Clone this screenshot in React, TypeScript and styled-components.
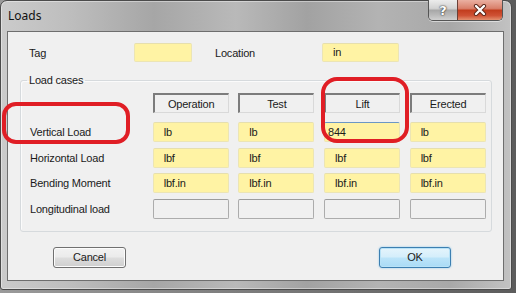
import React from "react";
import styled, { createGlobalStyle } from "styled-components";

const GlobalStyle = createGlobalStyle`
  * { box-sizing: border-box; }
  body {
    margin: 0;
    background: #7a7a7a;
    font-family: "Liberation Sans", Arial, sans-serif;
  }
`;

const Screen = styled.div`
  position: relative;
  width: 516px;
  height: 293px;
  overflow: hidden;
  background: linear-gradient(90deg, #9a9a9a, #5c5c5c);
`;

const Window = styled.div`
  width: 512px;
  height: 290px;
  border: 1px solid #4b4b4b;
  border-radius: 7px 7px 3px 3px;
  background: linear-gradient(
    90deg,
    #cbcbcb 0%,
    #bdbdbd 14%,
    #a6a6a6 30%,
    #b9b9b9 46%,
    #a2a2a2 60%,
    #b3b3b3 74%,
    #a8a8a8 88%,
    #c2c2c2 100%
  );
  box-shadow: inset 0 0 0 1px rgba(255, 255, 255, 0.4);
  display: flex;
  flex-direction: column;
`;

const TitleBar = styled.div`
  height: 30px;
  display: flex;
  align-items: flex-start;
  padding-left: 7px;
  padding-right: 8px;
`;

const Title = styled.span`
  font-family: "Noto Sans", "Open Sans", sans-serif;
  font-size: 12px;
  line-height: 30px;
  color: #111;
`;

const CaptionButtons = styled.div`
  margin-left: auto;
  margin-top: -1px;
  display: flex;
  border: 1px solid #555;
  border-top: none;
  border-radius: 0 0 5px 5px;
  overflow: hidden;
  box-shadow: 0 1px 0 rgba(255, 255, 255, 0.5);
`;

const CaptionButton = styled.div<{ $close?: boolean }>`
  width: ${(p) => (p.$close ? 45 : 28)}px;
  height: 20px;
  display: flex;
  align-items: center;
  justify-content: center;
  border-left: ${(p) => (p.$close ? "1px solid #6a4038" : "none")};
  background: ${(p) =>
    p.$close
      ? "linear-gradient(#eab0a2 0%, #d9806b 42%, #c23d1e 52%, #cf5235 78%, #e4906f 100%)"
      : "linear-gradient(#ececec 0%, #d2d2d2 42%, #a8a8a8 52%, #bcbcbc 78%, #d0d0d0 100%)"};
  color: #fff;
  font-family: "DejaVu Sans", sans-serif;
  font-weight: bold;
  font-size: 13px;
  text-shadow: 0 0 2px #333, 0 0 1px #222;
`;

const Client = styled.div`
  margin-left: 6px;
  width: 497px;
  height: 250px;
  background: #f0f0f0;
  border: 1px solid #6e6e6e;
  padding: 11px 0 0 12px;
  display: flex;
  flex-direction: column;
  font-size: 11px;
  letter-spacing: -0.2px;
  color: #1a1a1a;
`;

const TopRow = styled.div`
  display: flex;
  align-items: center;
  height: 19px;
  padding-left: 9px;
`;

const Label = styled.span<{ $w?: number; $gap?: number }>`
  width: ${(p) => p.$w ?? 0}px;
  margin-left: ${(p) => p.$gap ?? 0}px;
  white-space: nowrap;
`;

const Field = styled.div<{ $w?: number; $empty?: boolean; $focus?: boolean }>`
  width: ${(p) => (p.$w ? `${p.$w}px` : "auto")};
  height: ${(p) => (p.$w ? 19 : 20)}px;
  background: ${(p) => (p.$empty ? "#f0f0f0" : "#fff3a4")};
  border: 1px solid ${(p) => (p.$empty ? "#acacac" : "#ece5b4")};
  border-top-color: ${(p) =>
    p.$focus ? "#6b97c6" : p.$empty ? "#9c9c9c" : "#e6dfae"};
  border-radius: 2px;
  padding-left: ${(p) => (p.$focus ? 3 : 10)}px;
  line-height: ${(p) => (p.$w ? 17 : 18)}px;
  white-space: nowrap;
`;

const GroupBox = styled.fieldset`
  margin: 11px 0 0 0;
  width: 472px;
  border: 1px solid #d6dadd;
  border-radius: 3px;
  box-shadow: inset 1px 1px 0 #fbfbfb;
  padding: 6px 0 12px 9px;
`;

const Legend = styled.legend`
  margin-left: -3px;
  padding: 0 2px;
  line-height: 14px;
`;

const Grid = styled.div`
  display: grid;
  grid-template-columns: 113px repeat(4, 76px);
  grid-template-rows: 23.5px repeat(4, 20px);
  column-gap: 9.67px;
  row-gap: 5.5px;
  align-items: center;
`;

const ColHeader = styled.div`
  align-self: start;
  height: 20px;
  background: #f0f0f0;
  border-top: 2px solid #7c7c7c;
  border-left: 2px solid #7c7c7c;
  border-right: 1px solid #d9d9d9;
  border-bottom: 1px solid #d9d9d9;
  display: flex;
  align-items: center;
  justify-content: center;
`;

const RowLabel = styled.span`
  white-space: nowrap;
`;

const ButtonRow = styled.div`
  margin-top: 15px;
  display: flex;
  justify-content: space-between;
  padding: 0 52px 0 33px;
`;

const DialogButton = styled.div<{ $default?: boolean }>`
  width: ${(p) => (p.$default ? 72 : 73)}px;
  height: 21px;
  border-radius: 3px;
  border: 1px solid ${(p) => (p.$default ? "#3c7fb1" : "#707070")};
  background: ${(p) =>
    p.$default
      ? "linear-gradient(#e5f4fc 0%, #d4eefb 48%, #bce4f9 52%, #a9dbf6 100%)"
      : "linear-gradient(#f2f2f2 0%, #ebebeb 48%, #dddddd 52%, #cfcfcf 100%)"};
  box-shadow: ${(p) =>
    p.$default
      ? "inset 0 0 0 1px #b8e2f7, 0 0 2px #7fc3ec"
      : "inset 0 0 0 1px #fcfcfc"};
  display: flex;
  align-items: center;
  justify-content: center;
`;

const Highlight = styled.div<{ $x: number; $y: number; $w: number; $h: number; $r: number }>`
  position: absolute;
  left: ${(p) => p.$x}px;
  top: ${(p) => p.$y}px;
  width: ${(p) => p.$w}px;
  height: ${(p) => p.$h}px;
  border: 4px solid #e01e25;
  border-radius: ${(p) => p.$r}px;
  pointer-events: none;
`;

const columns = ["Operation", "Test", "Lift", "Erected"];

const rows = [
  { label: "Vertical Load", values: ["lb", "lb", "844", "lb"] },
  { label: "Horizontal Load", values: ["lbf", "lbf", "lbf", "lbf"] },
  { label: "Bending Moment", values: ["lbf.in", "lbf.in", "lbf.in", "lbf.in"] },
  { label: "Longitudinal load", values: ["", "", "", ""], empty: true },
];

function CloseGlyph() {
  return (
    <svg width="14" height="12" viewBox="0 0 14 12">
      <path d="M3 2 L11 10 M11 2 L3 10" stroke="#5a2418" strokeWidth="4.2" strokeLinecap="round" />
      <path d="M3 2 L11 10 M11 2 L3 10" stroke="#fff" strokeWidth="2.4" strokeLinecap="round" />
    </svg>
  );
}

export default function App() {
  return (
    <Screen>
      <GlobalStyle />
      <Window>
        <TitleBar>
          <Title>Loads</Title>
          <CaptionButtons>
            <CaptionButton>?</CaptionButton>
            <CaptionButton $close>
              <CloseGlyph />
            </CaptionButton>
          </CaptionButtons>
        </TitleBar>
        <Client>
          <TopRow>
            <Label $w={105}>Tag</Label>
            <Field $w={58} />
            <Label $w={107} $gap={23}>Location</Label>
            <Field $w={77}>in</Field>
          </TopRow>
          <GroupBox>
            <Legend>Load cases</Legend>
            <Grid>
              <span />
              {columns.map((c) => (
                <ColHeader key={c}>{c}</ColHeader>
              ))}
              {rows.map((r) => (
                <React.Fragment key={r.label}>
                  <RowLabel>{r.label}</RowLabel>
                  {r.values.map((v, i) => (
                    <Field key={i} $empty={r.empty} $focus={v === "844"}>
                      {v}
                    </Field>
                  ))}
                </React.Fragment>
              ))}
            </Grid>
          </GroupBox>
          <ButtonRow>
            <DialogButton>Cancel</DialogButton>
            <DialogButton $default>OK</DialogButton>
          </ButtonRow>
        </Client>
      </Window>
      <Highlight $x={2} $y={102} $w={128} $h={42} $r={14} />
      <Highlight $x={321} $y={77} $w={88} $h={66} $r={16} />
    </Screen>
  );
}
